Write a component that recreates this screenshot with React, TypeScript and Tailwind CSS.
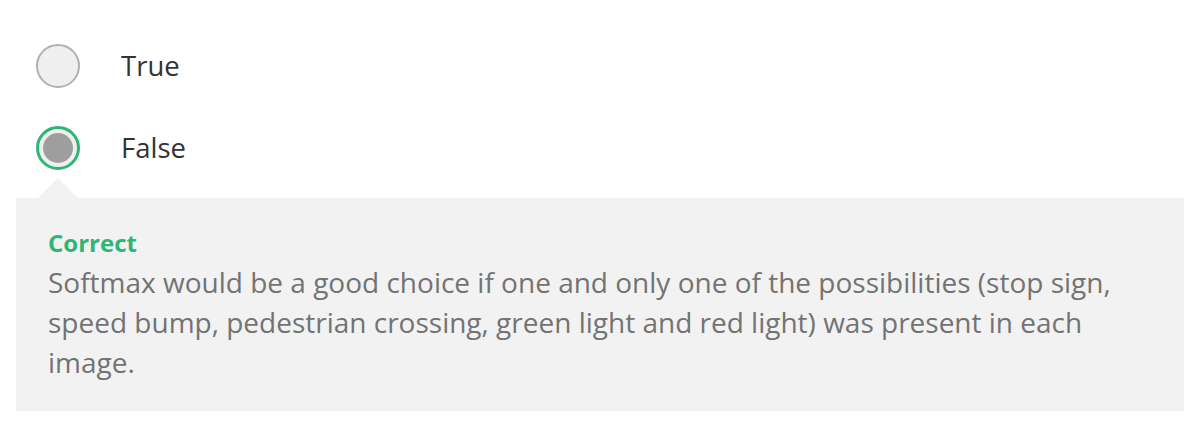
const Radio = ({ checked }: { checked?: boolean }) =>
  checked ? (
    <span className="flex size-[44px] shrink-0 items-center justify-center rounded-full border-[3px] border-[#2fb574] bg-[#efefef]">
      <span className="size-[30px] rounded-full bg-[#9e9e9e]" />
    </span>
  ) : (
    <span className="size-[44px] shrink-0 rounded-full border-2 border-[#b0b0b0] bg-[#efefef]" />
  );

const App = () => {
  return (
    <div
      className="min-h-[438px] bg-white pt-[44px] pr-[18px] pl-4"
      style={{ fontFamily: '"Open Sans", sans-serif' }}
    >
      <div className="flex flex-col gap-[38px] pl-5">
        <label className="flex items-center gap-[41px]">
          <Radio />
          <span className="text-[27.5px] text-[#333]">True</span>
        </label>
        <label className="flex items-center gap-[41px]">
          <Radio checked />
          <span className="text-[27.5px] text-[#333]">False</span>
        </label>
      </div>

      {/* Feedback panel with arrow pointing at the chosen answer */}
      <div className="relative mt-[28px] bg-[#f2f2f2] px-8 pt-[28px] pb-[29px]">
        <div className="absolute -top-[20px] left-[22px] h-0 w-0 border-x-[20px] border-b-[20px] border-x-transparent border-b-[#f2f2f2]" />
        <div className="mb-[2px] text-[24px] leading-[34px] font-bold text-[#2fb574]">Correct</div>
        <p className="text-[28px] leading-[40px] text-[#737373]">
          Softmax would be a good choice if one and only one of the possibilities (stop sign,
          speed bump, pedestrian crossing, green light and red light) was present in each
          image.
        </p>
      </div>
    </div>
  );
};

export default App;
